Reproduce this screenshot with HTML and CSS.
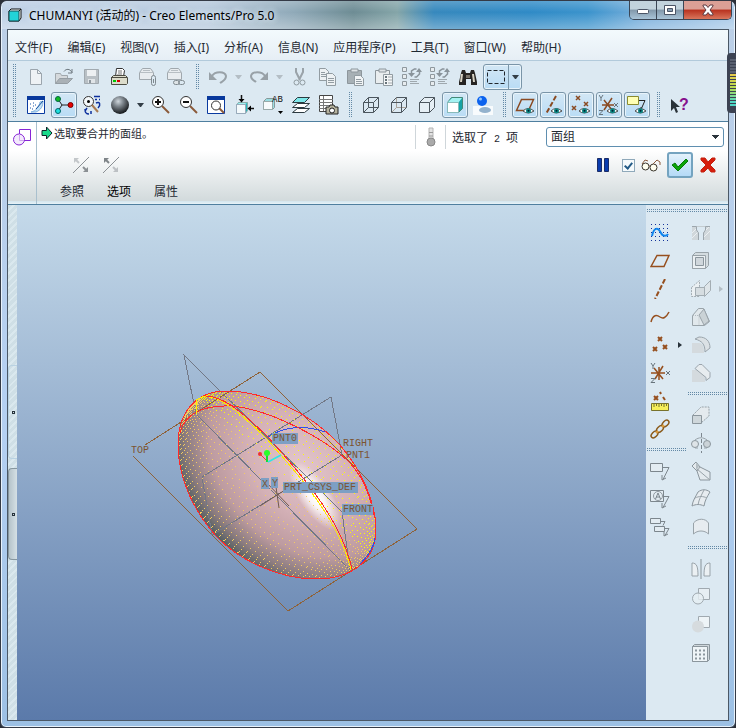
FILE: index.html
```html
<!DOCTYPE html>
<html lang="zh-CN">
<head>
    <meta charset="UTF-8">
    <meta name="viewport" content="width=device-width, initial-scale=1.0">
    <title>CHUMANYI (活动的) - Creo Elements/Pro 5.0</title>
    <link rel="stylesheet" href="styles.css">
</head>
<body>
<div class="window">
    <header class="titlebar">
        <svg class="app-icon" width="14" height="14" viewBox="0 0 14 14"><path d="M1 3l2-2h10v9l-2 3H1z" fill="#f4ffff" stroke="#111"/><path d="M1 3h10v10H1z" fill="#22d3d8" stroke="#174b50"/><path d="M11 3l2-2" stroke="#111"/></svg>
        <h1>CHUMANYI (活动的) - Creo Elements/Pro 5.0</h1>
        <div class="window-buttons">
            <button class="win-btn" aria-label="最小化"><svg width="14" height="10" viewBox="0 0 14 10"><rect x="1.5" y="4.5" width="11" height="4" rx="1" fill="#fff" stroke="#4b5566"/></svg></button>
            <button class="win-btn" aria-label="最大化"><svg width="14" height="12" viewBox="0 0 14 12"><path d="M1.5 1.5h11v9h-11z" fill="#fff" stroke="#4b5566"/><path d="M4.5 4.5h5v3h-5z" fill="#8aa0b4" stroke="#4b5566"/></svg></button>
            <button class="win-btn close" aria-label="关闭"><svg width="14" height="12" viewBox="0 0 14 12"><path d="M2 1h3l2 2.500L9 1h3v1L9 6l3 4v1H9L7 8.500 5 11H2v-1l3-4-3-4z" fill="#fff" stroke="#5d3a40"/></svg></button>
        </div>
    </header>

    <div class="client">
        <nav class="menubar">
            <button>文件(F)</button>
            <button>编辑(E)</button>
            <button>视图(V)</button>
            <button>插入(I)</button>
            <button>分析(A)</button>
            <button>信息(N)</button>
            <button>应用程序(P)</button>
            <button>工具(T)</button>
            <button>窗口(W)</button>
            <button>帮助(H)</button>
        </nav>

        <div class="toolbars">
            <span class="grip-v tall"></span>
            <div class="toolbar-rows">
                <!-- 文件 / 编辑 -->
                <div class="toolbar">
                    <button class="tool" aria-label="新建"><svg viewBox="0 0 20 20"><path d="M4.500 2.500h7l4 4v11h-11z" fill="#eef2f5" stroke="#9ba5ad"/><path d="M11.500 2.500v4h4" fill="none" stroke="#9ba5ad"/></svg></button>
                    <button class="tool" aria-label="打开"><svg viewBox="0 0 20 20"><path d="M1.500 16.500v-10h5l1 2h6v3" fill="#d5d9dc" stroke="#a1a8ad"/><path d="M1.500 16.500l4-5h13l-5 5z" fill="#aab1b6" stroke="#959da3"/><path d="M10 4.500c2-3 6-3 8 1M18 2v4h-4" fill="none" stroke="#6e7980"/></svg></button>
                    <button class="tool" aria-label="保存"><svg viewBox="0 0 20 20"><path d="M2.500 2.500h14v14h-14z" fill="#b9c0c5" stroke="#a1a9af"/><path d="M5 3h9v6H5z" fill="#edf0f2"/><path d="M6 12h7v4H6z" fill="#e1e5e8"/><path d="M7 13h2v3H7z" fill="#8f989f"/></svg></button>
                    <button class="tool" aria-label="打印"><svg viewBox="0 0 20 20"><path d="M5.500 9.500l1-8h6l2 2-1 6z" fill="#fff" stroke="#333"/><path d="M8 4h4M8 6h4M7 8h5" stroke="#777"/><path d="M1.500 10.500l2-2h12l2 2v6l-1 1h-15z" fill="#dcdccb" stroke="#4c4c42"/><path d="M1 10.500h16" stroke="#4c4c42"/><path d="M3 13h3v2H3z" fill="#00c400"/><path d="M7 13h3v2H7z" fill="#d80000"/></svg></button>
                    <button class="tool" aria-label="发送"><svg viewBox="0 0 20 20"><path d="M1.500 5.500l3-4h8l3 4v7h-14z" fill="#e8ecef" stroke="#a0a8ae"/><path d="M1.500 5.500h14M5 3.500h7" stroke="#b7bec3"/><path d="M13.500 10.500v6a2 2 0 0 0 4 0v-6a2 2 0 0 0-4 0M15.500 12v4" fill="#dce9f2" stroke="#7f898f"/></svg></button>
                    <button class="tool" aria-label="发送链接"><svg viewBox="0 0 20 20"><path d="M1.500 5.500l3-4h8l3 4v7h-14z" fill="#e8ecef" stroke="#a0a8ae"/><path d="M1.500 5.500h14M5 3.500h7" stroke="#b7bec3"/><rect x="7.500" y="13.500" width="6" height="4" rx="2" fill="#dde3e6" stroke="#7f898f"/><rect x="12.500" y="13.500" width="6" height="4" rx="2" fill="none" stroke="#7f898f"/></svg></button>
                    <span class="grip-v"></span>
                    <button class="tool" aria-label="撤消"><svg viewBox="0 0 20 20"><path d="M4 9c3-5 13-5 14 0 0 4-3 5-6 7" fill="none" stroke="#98a1a7" stroke-width="2"/><path d="M1 5v8h8z" fill="#98a1a7"/></svg></button>
                    <button class="drop pale" aria-label="撤消列表"></button>
                    <button class="tool" aria-label="重做"><svg viewBox="0 0 20 20"><path d="M16 9C13 4 3 4 2 9c0 4 3 4 5 6" fill="none" stroke="#98a1a7" stroke-width="2"/><path d="M19 5v8h-8z" fill="#98a1a7"/></svg></button>
                    <button class="drop pale" aria-label="重做列表"></button>
                    <button class="tool" aria-label="剪切"><svg viewBox="0 0 20 20"><path d="M6 1v4l4 8M13 1v4l-4 8" fill="none" stroke="#9aa3a9" stroke-width="2"/><circle cx="6.500" cy="15.500" r="2.500" fill="none" stroke="#8f999f"/><circle cx="12.500" cy="15.500" r="2.500" fill="none" stroke="#8f999f"/></svg></button>
                    <button class="tool" aria-label="复制"><svg viewBox="0 0 20 20"><g fill="#edf1f3" stroke="#929ca2"><path d="M1.500 1.500h6l3 3v9h-9z"/><path d="M8.500 6.500h6l3 3v9h-9z"/></g><path d="M3 5.500h4M3 7.500h5M3 9.500h5M10 11.500h6M10 13.500h6M10 15.500h6" stroke="#929ca2"/></svg></button>
                    <button class="tool" aria-label="粘贴"><svg viewBox="0 0 20 20"><path d="M1.500 3.500h14v13h-14z" fill="#a7b0b5" stroke="#8d969c"/><path d="M5 2h7v3H5z" fill="#dfe4e7" stroke="#8d969c"/><path d="M8.500 8.500h6l3 3v7h-9z" fill="#f1f4f6" stroke="#929ca2"/><path d="M10 12.500h5M10 14.500h6M10 16.500h6" stroke="#929ca2"/></svg></button>
                    <button class="tool" aria-label="选择性粘贴"><svg viewBox="0 0 20 20"><path d="M1.500 3.500h14v13h-14z" fill="#e9edef" stroke="#8d969c"/><path d="M5 2h7v3H5z" fill="#dfe4e7" stroke="#8d969c"/><path d="M9.500 7.500h9v11h-9z" fill="#f4f6f7" stroke="#929ca2"/><path d="M11 10h2M11 13h2M11 16h2" stroke="#68747b" stroke-width="2"/><path d="M14 10h4M14 13h4M14 16h4" stroke="#a2aaaf"/></svg></button>
                    <button class="tool" aria-label="再生"><svg viewBox="0 0 20 20"><path d="M.5.500h4v4h-4zM.5 7.500h4v4h-4zM.5 14.500h4v4h-4z" fill="#e7ecef" stroke="#8f989e"/><path d="M9.500 8V4l3-2h2M17.500 3v4l-3 3h-2" fill="none" stroke="#89939a" stroke-width="1.500"/><path d="M6 6h7l-3.500 4zM14 5h6l-3-4z" fill="#89939a"/><path d="M8 12.500h9M8 14.500h7M8 16.500h9" stroke="#9fa8ae"/></svg></button>
                    <button class="tool" aria-label="再生管理器"><svg viewBox="0 0 20 20"><path d="M.5.500h4v4h-4zM.5 7.500h4v4h-4zM.5 14.500h4v4h-4z" fill="#e7ecef" stroke="#8f989e"/><path d="M9.500 8V4l3-2h2M17.500 3v4l-3 3h-2" fill="none" stroke="#89939a" stroke-width="1.500"/><path d="M6 6h7l-3.500 4zM14 5h6l-3-4z" fill="#89939a"/><path d="M8 12.500h9M8 14.500h7M8 16.500h9" stroke="#9fa8ae"/></svg></button>
                    <button class="tool" aria-label="查找"><svg viewBox="0 0 20 20"><path d="M3 6l1-3h3l1 3h4l1-3h3l1 3 2 9v3h-6v-6H8v6H1v-3z" fill="#262422"/><path d="M4 7l-1 8M15 7l1 8" stroke="#d8d3c4" stroke-width="2"/><path d="M8 8h4v3H8z" fill="#79736a"/></svg></button>
                    <span class="split">
                        <button class="split-main" aria-label="选取框"><svg width="20" height="16" viewBox="0 0 20 16"><path d="M1.500 1.500h17v13h-17z" fill="none" stroke="#20262c" stroke-dasharray="4 2"/></svg></button>
                        <button class="drop" aria-label="选取方式"></button>
                    </span>
                </div>
                <!-- 视图 / 模型显示 / 基准显示 -->
                <div class="toolbar">
                    <button class="tool" aria-label="草绘视图"><svg viewBox="0 0 20 20"><path d="M1.500 1.500h17v17h-17z" fill="#fff" stroke="#0a3aa0"/><path d="M1 1h18v4H1z" fill="#08389c"/><path d="M5 17c5-1 8-5 9-10l3-1c0 5-2 9-7 11z" fill="#c4e2f8" stroke="#7fb0dc"/><path d="M10 14l7-8" stroke="#14509e"/><path d="M4 9h1M7 8h1M9 10h1M4 13h1M6 14h1M7 11h1" stroke="#1b56a8"/></svg></button>
                    <button class="tool on" aria-label="旋转中心"><svg viewBox="0 0 20 20"><path d="M4 4l4 6h8M8 10l-4 6" fill="none" stroke="#222"/><circle cx="4" cy="4" r="2.500" fill="#11bb22" stroke="#064"/><circle cx="4" cy="16" r="2.500" fill="#1fe0e0" stroke="#066"/><circle cx="16.500" cy="10" r="2.500" fill="#e60000" stroke="#700"/></svg></button>
                    <button class="tool" aria-label="定向模式"><svg viewBox="0 0 20 20"><circle cx="6.500" cy="6.500" r="5" fill="#f4f8fa" stroke="#333"/><circle cx="6.500" cy="6.500" r="1.500"/><path d="M10 10l6 7" stroke="#a87a52" stroke-width="2"/><path d="M12 1.500h6M13 4.500h2M17 4.500h1M14 8c4-2 5 2 2 5M3 14c0 4 1 5 4 5M5 13l-2 3M9 16v3" fill="none" stroke="#0c2f9c" stroke-width="1.500"/></svg></button>
                    <button class="tool" aria-label="外观库"><svg viewBox="0 0 20 20"><defs><radialGradient id="ball" cx=".4" cy=".3" r=".7"><stop offset="0" stop-color="#cfd6dc"/><stop offset=".4" stop-color="#7c848b"/><stop offset="1" stop-color="#15181b"/></radialGradient></defs><circle cx="10" cy="10" r="9" fill="url(#ball)"/></svg></button>
                    <button class="drop" aria-label="外观列表"></button>
                    <button class="tool" aria-label="放大"><svg viewBox="0 0 20 20"><path d="M11 11l7 7" stroke="#8b5a3a" stroke-width="2"/><circle cx="7" cy="7" r="5.500" fill="#fff" stroke="#333"/><path d="M4 7h6M7 4v6" stroke="#111" stroke-width="2"/></svg></button>
                    <button class="tool" aria-label="缩小"><svg viewBox="0 0 20 20"><path d="M11 11l7 7" stroke="#8b5a3a" stroke-width="2"/><circle cx="7" cy="7" r="5.500" fill="#fff" stroke="#333"/><path d="M4 7h6" stroke="#111" stroke-width="2"/></svg></button>
                    <button class="tool" aria-label="重新调整"><svg viewBox="0 0 20 20"><path d="M.5 1.500h17v17H.5z" fill="#fff" stroke="#0a3aa0"/><path d="M0 1h18v4H0z" fill="#08389c"/><path d="M12 13l5 5" stroke="#8b5a3a" stroke-width="2"/><circle cx="9" cy="10.500" r="4.500" fill="#fff" stroke="#333"/></svg></button>
                    <button class="tool" aria-label="重定向"><svg viewBox="0 0 20 20"><path d="M1.500 9.500l2-2h9v8l-2 3h-9z" fill="#25b8bc" stroke="#8aa"/><path d="M2 9l2-1h8l-2 1z" fill="#a3f2f2"/><path d="M1.500 9.500h9v9h-9z" fill="#f4fafc" stroke="#9ab"/><path d="M6.500 0v5M19 13.500h-4" stroke="#111" stroke-width="1.500"/><path d="M3.500 4h6l-3 3.500zM16 10.500v6l-3.500-3z"/></svg></button>
                    <button class="tool" aria-label="已命名视图"><svg viewBox="0 0 20 20"><path d="M0.500 6.500l3-3h8v9l-2 2h-9z" fill="#9bdde2" stroke="#899"/><path d="M.5 6.500h9v8h-9z" fill="#f7fbfc" stroke="#9aa"/><path d="M15 16h5l-2.500 3z"/><text x="9" y="7" class="icon-text">AB</text></svg></button>
                    <button class="tool" aria-label="层"><svg viewBox="0 0 20 20"><g stroke="#2c3a40"><path d="M1.500 17.500l5-4h12l-5 4z" fill="#fff"/><path d="M1.500 12.500l5-4h12l-5 4z" fill="#fff"/><path d="M1.500 7.500l5-5h12l-5 5z" fill="#7ee8ea"/></g></svg></button>
                    <button class="tool" aria-label="视图管理器"><svg viewBox="0 0 20 20"><path d="M.5.500h13v16H.5z" fill="#fff" stroke="#444"/><path d="M0 4.500h14M0 7.500h14M0 10.500h14M0 13.500h14M4.500 1v15" stroke="#777"/><path d="M7 12h3l1-2h4l1 2h3v7H7z" fill="#b5b29e" stroke="#222"/><circle cx="13" cy="15.500" r="2.500" fill="#fff" stroke="#222"/></svg></button>
                    <span class="grip-v"></span>
                    <button class="tool" aria-label="线框"><svg viewBox="0 0 20 20"><path d="M2.500 7.500h10v10h-10zM7.500 2.500h10v10h-10zM2.500 7.500l5-5M12.500 7.500l5-5M12.500 17.500l5-5M2.500 17.500l5-5" fill="none" stroke="#4c565e"/></svg></button>
                    <button class="tool" aria-label="隐藏线"><svg viewBox="0 0 20 20"><path d="M7.500 2.500v10h10M2.500 17.500l5-5" fill="none" stroke="#a9a39b"/><path d="M2.500 7.500h10v10h-10zM2.500 7.500l5-5h10v10l-5 5M12.500 7.500l5-5" fill="none" stroke="#4c565e"/></svg></button>
                    <button class="tool" aria-label="无隐藏线"><svg viewBox="0 0 20 20"><path d="M2.500 7.500h10v10h-10zM2.500 7.500l5-5h10v10l-5 5M12.500 7.500l5-5" fill="#e6eff5" stroke="#4c565e"/></svg></button>
                    <button class="tool on" aria-label="着色"><svg viewBox="0 0 20 20"><path d="M2.500 7.500l4-5h11v11l-4 4h-11z" fill="#14a3a6" stroke="#487"/><path d="M3 7l4-4h10l-3.500 4.500z" fill="#a3f2f2"/><path d="M2.500 7.500h11v10h-11z" fill="#fff" stroke="#8bb"/></svg></button>
                    <button class="tool" aria-label="增强的真实感"><svg viewBox="0 0 20 20"><path d="M0 11h20v9H0z" fill="#f8fbfd"/><ellipse cx="12" cy="15" rx="6" ry="3" fill="#93b2cd"/><circle cx="9" cy="6" r="5" fill="#0b62ee"/><circle cx="7.500" cy="4" r="1.500" fill="#8fc6ff"/></svg></button>
                    <span class="grip-v"></span>
                    <button class="tool on" aria-label="平面显示"><svg viewBox="0 0 20 20"><path d="M1.500 15.500l5-11h12l-5 11z" fill="none" stroke="#8a4a22" stroke-width="1.500"/><use href="#eye"/></svg></button>
                    <button class="tool on" aria-label="轴显示"><svg viewBox="0 0 20 20"><path d="M13 1L3 19" stroke="#8a4a22" stroke-width="2" stroke-dasharray="5 2"/><use href="#eye"/></svg></button>
                    <button class="tool on" aria-label="点显示"><svg viewBox="0 0 20 20"><path d="M5 1l4 4M9 1l-4 4M13 7l4 4M17 7l-4 4M1 11l4 4M5 11l-4 4" stroke="#8a4a22" stroke-width="1.500"/><use href="#eye"/></svg></button>
                    <button class="tool on" aria-label="坐标系显示"><svg viewBox="0 0 20 20"><path d="M3 10h12M5 5l8 10M13 3L5 15" stroke="#8a4a22" stroke-width="1.500"/><path d="M0 0l2 3 2-3M2 3v3M0 15.500h4l-4 4h4M15 8l4 4M19 8l-4 4" fill="none" stroke="#68747c"/><use href="#eye"/></svg></button>
                    <button class="tool on" aria-label="注释显示"><svg viewBox="0 0 20 20"><path d="M.5 1.500h11v8H.5z" fill="#ffffb4" stroke="#8a8a30"/><path d="M12 5.500h6l-4 9M14 12v3h3" fill="none" stroke="#222"/><use href="#eye"/></svg></button>
                    <span class="grip-v"></span>
                    <button class="tool" aria-label="这是什么"><svg viewBox="0 0 20 20"><path d="M2 4v12l3-3 2 5 2-1-2-5h4z" fill="#2a3238"/><text x="10" y="15" class="help-mark">?</text></svg></button>
                </div>
            </div>
        </div>

        <section class="dashboard">
            <div class="feature-icon"><svg width="20" height="20" viewBox="0 0 20 20"><path d="M7.500 1.500h11v11h-11z" fill="#fff" stroke="#8726d6"/><circle cx="7" cy="11.500" r="5.500" fill="#f3eafc" stroke="#8726d6"/><path d="M7.500 6v6.500H12" fill="none" stroke="#cda6ee"/></svg></div>
            <div class="dash-main">
                <div class="dash-row">
                    <p class="message"><svg width="12" height="14" viewBox="0 0 12 14"><path d="M1 4.500h4.500V1L11 7l-5.500 6V9.500H1z" fill="#19d98a" stroke="#10222a"/></svg>选取要合并的面组。</p>
                    <div class="status">
                        <span class="thermo"><svg width="14" height="20" viewBox="0 0 14 20"><path d="M5 1h4v11H5z" fill="#e3e3e3" stroke="#b5b5b5"/><path d="M5 5.500h4M5 9h4" stroke="#999"/><circle cx="7" cy="15" r="4" fill="#aaa" stroke="#888"/></svg></span>
                        <label for="filter">选取了<span class="count"> 2 </span>项</label>
                    </div>
                    <select id="filter"><option>面组</option></select>
                </div>
                <div class="dash-row actions">
                    <button class="flip" aria-label="改变第一面组侧"><svg width="18" height="18" viewBox="0 0 18 18"><path d="M1 17L17 1" stroke="#8b9094"/><path d="M2 2h5L2 7z" fill="#c3c7ca"/><path d="M3 3l4 4" stroke="#c3c7ca" stroke-width="2"/><path d="M16 16h-5l5-5z" fill="#8b9094"/><path d="M11 11l4 4" stroke="#8b9094" stroke-width="2"/></svg></button>
                    <button class="flip" aria-label="改变第二面组侧"><svg width="18" height="18" viewBox="0 0 18 18"><path d="M1 17L17 1" stroke="#8b9094"/><path d="M2 2h5L2 7z" fill="#7e8488"/><path d="M3 3l4 4" stroke="#7e8488" stroke-width="2"/><path d="M16 16h-5l5-5z" fill="#bdc1c4"/><path d="M11 11l4 4" stroke="#bdc1c4" stroke-width="2"/></svg></button>
                    <span class="spacer"></span>
                    <button class="plain" aria-label="暂停"><svg width="12" height="14" viewBox="0 0 12 14"><path d="M.5.5h4v13h-4zM7.500.5h4v13h-4z" fill="#0a3cae" stroke="#1a2c66"/></svg></button>
                    <input type="checkbox" id="preview" checked aria-label="预览">
                    <label for="preview" aria-label="预览"><svg width="20" height="14" viewBox="0 0 20 14"><g fill="#fffff0" stroke="#3a352c"><circle cx="4.500" cy="8.500" r="3.500"/><circle cx="12.500" cy="9.500" r="3.500"/></g><path d="M1 6l3-4 3 1M12 6l4-4 3 2v3M8 8h1" fill="none" stroke="#8a5a3c"/></svg></label>
                    <button class="accept" aria-label="确定"><svg width="18" height="16" viewBox="0 0 18 16"><path d="M1 8l3-2 3 4 8-8 2 2L7 14z" fill="#0aa50a" stroke="#067a06"/></svg></button>
                    <button class="plain cancel" aria-label="取消"><svg width="18" height="16" viewBox="0 0 18 16"><path d="M2 1h4l3 4 4-4h3v2l-5 5 5 5v2h-4l-3-4-4 4H2v-2l5-5-5-5z" fill="#d71d0c" stroke="#c3200f"/></svg></button>
                </div>
                <div class="dash-row tabs">
                    <button>参照</button>
                    <button class="ready">选项</button>
                    <button>属性</button>
                </div>
            </div>
        </section>

        <main class="workspace">
            <div class="gutter">
                <button class="sash" aria-label="导航器"></button>
                <button class="sash raised" aria-label="浏览器"></button>
            </div>

            <div class="viewport">
                <svg class="model" viewBox="17 205 629 515" preserveAspectRatio="xMinYMin meet">
                    <defs>
                        <g id="eye"><path d="M8 16q5-5 11 0-6 4-11 0z" fill="#fff" stroke="#4d4d4d"/><circle cx="13.500" cy="15.800" r="2.500" fill="#0b8a86"/><circle cx="13.500" cy="15.800" r="1" fill="#023"/></g>
                        <path id="body" d="M178 445C178 412 196 391 226 391C265 391 310 413 339 444C362 470 376 503 376 530C376 560 352 579 316 579C280 579 240 561 217 537C194 512 178 478 178 445Z"/>
                        <clipPath id="inside"><use href="#body"/></clipPath>
                        <radialGradient id="skin" gradientUnits="userSpaceOnUse" cx="0" cy="0" r="1" gradientTransform="translate(302 466) rotate(43) scale(150 110)">
                            <stop offset="0" stop-color="#e2c5cb"/>
                            <stop offset=".4" stop-color="#d4b1b7"/>
                            <stop offset=".7" stop-color="#bd9ba0"/>
                            <stop offset=".88" stop-color="#8b7c7f"/>
                            <stop offset="1" stop-color="#566062"/>
                        </radialGradient>
                        <radialGradient id="shine">
                            <stop offset="0" stop-color="#fff"/>
                            <stop offset=".4" stop-color="#fff" stop-opacity=".85"/>
                            <stop offset="1" stop-color="#fff" stop-opacity="0"/>
                        </radialGradient>
                    </defs>

                    <use href="#body" fill="url(#skin)"/>
                    <g clip-path="url(#inside)">
                        <ellipse rx="40" ry="16" fill="url(#shine)" transform="translate(315 496) rotate(56)"/>
                    </g>

                    <!-- 基准平面 -->
                    <g fill="none" shape-rendering="crispEdges">
                        <path d="M145 445L260 372L417 529L288 611L133 456" stroke="#8f6238"/>
                        <path d="M184 355L342 512L350 570L196 414Z" stroke="#727886"/>
                        <path d="M331 397L342 455L212 535L202 477Z" stroke="#727886"/>
                    </g>
                    <g clip-path="url(#inside)" shape-rendering="crispEdges">
                        <path id="dots-low" stroke="#f5cb60"/>
                        <path id="dots-high" stroke="#ffff00"/>
                    </g>

                    <g fill="none" shape-rendering="crispEdges">
                        <use href="#body" stroke="#ff2a2a"/>
                        <path d="M268 437C284 426 306 425 325 432" stroke="#2f50e8"/>
                        <path d="M375 538C374 548 368 556 360 564" stroke="#2f50e8"/>
                        <path d="M180 433C186 409 210 405 233 406C270 410 325 438 350 463C362 476 370 495 374 515" stroke="#ff2a2a"/>
                        <path d="M196 414V400L204 396" stroke="#ffee00"/>
                        <path d="M203 396C221 396 239 412 266 438C299 475 339 520 351 570" stroke="#ffe600"/>
                        <path d="M204 396C222 395 241 411 268 437C301 474 341 519 352 569" stroke="#ff2a2a"/>
                    </g>

                    <!-- 旋转中心和坐标系 -->
                    <g fill="none">
                        <path d="M260 454L268 462" stroke="#e33"/>
                        <path d="M267 454V462" stroke="#1d3" stroke-width="2"/>
                        <path d="M268 462L281 455" stroke="#2ee6e6" stroke-width="1.500"/>
                        <path d="M260 506L285 490M266 482L289 506M276 487L279 508" stroke="#6f5a50"/>
                    </g>
                    <circle cx="260" cy="454" r="2" fill="#f03030"/>
                    <circle cx="267" cy="453" r="3" fill="#28ff28"/>

                    <g fill="#7d9fc4">
                        <rect x="272" y="433" width="26" height="11"/>
                        <rect x="283" y="482" width="75" height="11"/>
                        <rect x="261" y="478" width="8" height="11"/>
                        <rect x="271" y="477" width="7" height="11"/>
                        <rect x="342" y="504" width="31" height="11"/>
                    </g>
                    <g class="datum">
                        <text x="131" y="453">TOP</text>
                        <text x="273" y="441">PNT0</text>
                        <text x="343" y="446">RIGHT</text>
                        <text x="346" y="458">PNT1</text>
                        <text x="262" y="487">X</text>
                        <text x="272" y="486">Y</text>
                        <text x="284" y="490">PRT_CSYS_DEF</text>
                        <text x="343" y="512">FRONT</text>
                    </g>
                </svg>
            </div>

            <aside class="side">
                <!-- 基准 / 注释 -->
                <div class="side-col">
                    <span class="grip-h"></span>
                    <button class="tool" aria-label="草绘"><svg viewBox="0 0 20 20"><path d="M1 1.500h18M1 5.500h18M1 9.500h18M1 13.500h18M1 17.500h18" stroke="#12319a" stroke-dasharray="1 3"/><path d="M2 13c2-9 6-9 9-3 2 4 6 3 7 1" fill="none" stroke="#0f86ee" stroke-width="2"/></svg></button>
                    <button class="tool" aria-label="平面"><svg viewBox="0 0 20 20"><path d="M1 15.500l6-11h12l-5 11z" fill="none" stroke="#964f1e" stroke-width="1.500"/></svg></button>
                    <button class="tool" aria-label="轴"><svg viewBox="0 0 20 20"><path d="M15 0L5 20" stroke="#964f1e" stroke-width="2" stroke-dasharray="5 2"/></svg></button>
                    <button class="tool" aria-label="曲线"><svg viewBox="0 0 20 20"><path d="M1 15c2-8 6-7 9-5s6 1 9-5" fill="none" stroke="#964f1e" stroke-width="1.500"/></svg></button>
                    <div class="with-flyout">
                        <button class="tool" aria-label="点"><svg viewBox="0 0 20 20"><path d="M8 2l4 4M12 2l-4 4M3 12l4 4M7 12l-4 4M13 10l4 4M17 10l-4 4" stroke="#964f1e" stroke-width="2"/></svg></button>
                        <button class="flyout" aria-label="更多点工具"></button>
                    </div>
                    <button class="tool" aria-label="坐标系"><svg viewBox="0 0 20 20"><path d="M1 10h14M4 5l9 11M13 3L5 16M9 4v13" stroke="#964f1e" stroke-width="1.500"/><path d="M1 0l2 3 2-3M3 3v3M1 15.500h4l-4 4h4M16 8l4 4M20 8l-4 4" fill="none" stroke="#68747c"/></svg></button>
                    <button class="tool" aria-label="分析"><svg viewBox="0 0 20 20"><path d="M4 5l4 4M8 5L4 9M10 1l1 2M13 6l2 3" stroke="#964f1e" stroke-width="2"/><path d="M1.500 12.500h17v7h-17z" fill="#f6ef5a" stroke="#77722c"/><path d="M4 13v3M6.500 13v2M9 13v3M11.500 13v2M14 13v3M16.500 13v2" stroke="#77722c"/></svg></button>
                    <button class="tool" aria-label="参照"><svg viewBox="0 0 20 20"><g fill="none" stroke="#8a5a1a" stroke-width="1.500"><ellipse cx="4.500" cy="15.500" rx="4" ry="2.500" transform="rotate(-45 4.500 15.500)"/><ellipse cx="10" cy="10" rx="4" ry="2.500" transform="rotate(-45 10 10)"/><ellipse cx="15.500" cy="4.500" rx="4" ry="2.500" transform="rotate(-45 15.500 4.500)"/></g><path d="M6 14l2-2M12 8l2-2" stroke="#e0a040" stroke-width="2"/></svg></button>
                    <span class="grip-h between"></span>
                    <button class="tool" aria-label="注释"><svg viewBox="0 0 20 20"><path d="M.5 2.500h12v8H.5z" fill="#e3ecf2" stroke="#7c868d"/><path d="M13 6.500h6l-6 12M12 14v5l4-2" fill="none" stroke="#7c868d"/></svg></button>
                    <button class="tool" aria-label="符号"><svg viewBox="0 0 20 20"><path d="M.5 1.500h13v11H.5z" fill="#e3ecf2" stroke="#7c868d"/><circle cx="8" cy="7" r="4.500" fill="none" stroke="#8f989f"/><path d="M5.500 10L8 4l2.500 6M6 8h4M14 7.500h5l-6 11M12 14v5l4-2" fill="none" stroke="#7c868d"/></svg></button>
                    <button class="tool" aria-label="注释传播"><svg viewBox="0 0 20 20"><path d="M.5 1.500h10v5H.5zM4.500 9.500h10v5h-10z" fill="#e3ecf2" stroke="#7c868d"/><path d="M11 4.500h4l-2 4M15 11.500h4l-4 7M14 15v4l4-2" fill="none" stroke="#7c868d"/></svg></button>
                </div>
                <!-- 工程特征 / 编辑特征 -->
                <div class="side-col dim">
                    <span class="grip-h"></span>
                    <button class="tool" aria-label="孔"><svg viewBox="0 0 20 20"><path d="M1 3h5v4l2 3v7H1zM19 3h-5v4l-2 3v7h7z" fill="#cfd4d7"/><path d="M1 10l5-5M1 15l6-6M14 8l4-4M13 14l6-6" stroke="#eef1f3"/><path d="M6 3.500h8" stroke="#c0c7cb"/><path d="M1 3.500h4.500V7l2 3v7M19 3.500h-4.500V7l-2 3v7" fill="none" stroke="#929ba1"/></svg></button>
                    <button class="tool" aria-label="壳"><svg viewBox="0 0 20 20"><path d="M1.500 4.500l3-3h13v13l-3 3h-13z" fill="#d3dade" stroke="#8e979d"/><path d="M1.500 4.500h13v13h-13z" fill="#eef2f4" stroke="#8e979d"/><path d="M4.500 6.500h8v8h-8z" fill="#ced5d9" stroke="#7e888f"/></svg></button>
                    <div class="with-flyout">
                        <button class="tool" aria-label="筋"><svg viewBox="0 0 20 20"><path d="M.5 8.500l8-7v16h-8z" fill="#eef2f4" stroke="#9aa3a9" stroke-dasharray="2 1"/><path d="M13.500 7.500l6-6v10l-6 6z" fill="#dfe5e8" stroke="#9aa3a9"/><path d="M4.500 8.500h9v8h-9z" fill="#d5dbdf" stroke="#9aa3a9"/></svg></button>
                        <button class="flyout pale" aria-label="更多筋工具"></button>
                    </div>
                    <button class="tool" aria-label="拔模"><svg viewBox="0 0 20 20"><path d="M1.500 8.500l6-7h5l6 13-5 4h-12z" fill="#e3e8eb" stroke="#8e979d"/><path d="M8 8l5-6 5 12-5 4z" fill="#c7ced2" stroke="#8e979d"/><path d="M2 8.500h6v9" fill="none" stroke="#aeb6bb" stroke-dasharray="1 1"/></svg></button>
                    <button class="tool" aria-label="倒圆角"><svg viewBox="0 0 20 20"><path d="M1 8h7c4 0 5 4 5 10H1z" fill="#d3d8db"/><path d="M4 4l4-2c7 0 11 4 11 11l-5 4c0-8-3-11-10-13z" fill="#dbe0e3" stroke="#9099a0"/></svg></button>
                    <button class="tool" aria-label="倒角"><svg viewBox="0 0 20 20"><path d="M1 7h6l7 6v6H1z" fill="#d3d8db"/><path d="M4 5.500l4-4h3l8 8v5l-4 3v-3z" fill="#e9edef" stroke="#9099a0"/></svg></button>
                    <span class="grip-h between"></span>
                    <button class="tool" aria-label="拉伸"><svg viewBox="0 0 20 20"><path d="M2 10l8-8h8v9l-8 7" fill="#e6ebee" stroke="#8e979d" stroke-dasharray="2 1"/><path d="M1.500 10.500h9v8h-9z" fill="#cdd4d8" stroke="#7e888f"/></svg></button>
                    <button class="tool" aria-label="旋转"><svg viewBox="0 0 20 20"><circle cx="4" cy="11" r="3.500" fill="#dfe4e7" stroke="#7e888f"/><circle cx="16" cy="11" r="3.500" fill="#c9d0d4" stroke="#7e888f"/><path d="M10.500 0v20" stroke="#6d777e" stroke-dasharray="4 2"/><path d="M4 7c4-3 8-3 12 0M4 15h3M13 15h3" fill="none" stroke="#8e979d"/></svg></button>
                    <button class="tool" aria-label="变截面扫描"><svg viewBox="0 0 20 20"><path d="M1 5l4-4 4 5 10 5v8H9L6 10z" fill="#e6ebee" stroke="#7e888f"/><path d="M6 8l13 11M9 6l-3 4" stroke="#8e979d"/><path d="M5 1l3 5-3 3z" fill="#aeb7bc"/></svg></button>
                    <button class="tool" aria-label="边界混合"><svg viewBox="0 0 20 20"><path d="M1 17c1-6 3-8 6-14 4-3 8-3 12 0-3 5-5 8-6 14-4-2-8-2-12 0z" fill="#e9edf0" stroke="#7e888f"/><path d="M4 9c4-2 8-2 12 0M7 16c1-6 3-9 6-15" fill="none" stroke="#8e979d"/></svg></button>
                    <button class="tool" aria-label="造型"><svg viewBox="0 0 20 20"><path d="M2.500 17V6c4-5 12-5 15 0v11c-4-4-11-4-15 0z" fill="#e9edf0" stroke="#8e979d"/></svg></button>
                    <span class="grip-h between"></span>
                    <button class="tool" aria-label="镜像"><svg viewBox="0 0 20 20"><path d="M1 4c5 0 6 4 6 13H1zM19 4c-5 0-6 4-6 13h6z" fill="#eef2f4" stroke="#8e979d"/><path d="M10 0v20" stroke="#7b858b"/></svg></button>
                    <button class="tool" aria-label="合并"><svg viewBox="0 0 20 20"><path d="M7.500 1.500h11v11h-11z" fill="#e9f0f4" stroke="#969fa5"/><circle cx="7" cy="11.500" r="5.500" fill="#e9f0f4" fill-opacity=".8" stroke="#969fa5"/></svg></button>
                    <button class="tool" aria-label="修剪"><svg viewBox="0 0 20 20"><path d="M7.500 1.500h11v11h-11z" fill="#f2f6f8" stroke="#969fa5"/><circle cx="7" cy="11.500" r="6" fill="#d5d9db"/></svg></button>
                    <button class="tool" aria-label="阵列"><svg viewBox="0 0 20 20"><path d="M1.500 3.500l2-2h15v15l-2 2h-15z" fill="#ccd3d7" stroke="#7e888f"/><path d="M1.500 3.500h15v15h-15z" fill="#f2f6f8" stroke="#7e888f"/><path d="M4 7.500h10M4 11.500h10M4 15.500h10" stroke="#7e888f" stroke-width="2" stroke-dasharray="2 2"/></svg></button>
                </div>
            </aside>
        </main>
    </div>
    <div class="meter"></div>
</div>
<script src="mesh.js"></script>
</body>
</html>
```
FILE: styles.css
```css
* {
    box-sizing: border-box;
}

body {
    margin: 0;
    font-family: "Noto Sans", "Noto Sans CJK SC", sans-serif;
    font-size: 12px;
    color: #1f2a33;
    background: #2b2f38;
}

button {
    margin: 0;
    padding: 0;
    border: none;
    background: none;
    color: inherit;
    font: inherit;
}

svg {
    display: block;
}

.window {
    position: relative;
    display: flex;
    flex-direction: column;
    min-height: 100vh;
    padding: 0 6px 6px;
    border: 1px solid #343a46;
    border-radius: 7px 7px 6px 6px;
    background: linear-gradient(#bccfe6, #b4d0f2 60%, #9cc0e4);
    box-shadow: inset 0 0 0 1px #e8f2fb;
}

/* 标题栏 */
.titlebar {
    display: flex;
    align-items: center;
    height: 28px;
    margin: 0 -5px;
    padding: 0 2px 0 6px;
    border-radius: 6px 6px 0 0;
    background: linear-gradient(rgba(255, 255, 255, 0.2), transparent 40%, rgba(255, 255, 255, 0.3)), linear-gradient(90deg, #bccfe5 0%, #b5c8dc 28%, #8fa9b8 40%, #6d8c94 48%, #84a5a8 54%, #3688bd 59%, #2f8ac6 72%, #3b93cc 80%, #7db1dc 88%, #a9c9e8 100%);
}

.titlebar h1 {
    flex: 1;
    margin: 0 0 0 7px;
    font-size: 12px;
    font-weight: normal;
    color: #000;
    text-shadow: 0 0 6px #e6f0fa, 0 0 6px #e6f0fa;
}

.window-buttons {
    display: flex;
    align-self: flex-start;
    border: 1px solid #3b4655;
    border-top: none;
    border-radius: 0 0 5px 5px;
    overflow: hidden;
}

.win-btn {
    display: flex;
    align-items: center;
    justify-content: center;
    width: 27px;
    height: 18px;
    border-right: 1px solid #3b4655;
    background: linear-gradient(#c2d3dd 45%, #8298aa 50%, #a9c4d8);
}

.win-btn.close {
    width: 47px;
    border-right: none;
    background: linear-gradient(#dba096 45%, #b8321f 50%, #d9765c);
}

.client {
    display: flex;
    flex: 1;
    flex-direction: column;
    border: 1px solid #4b5866;
    background: #dce9f2;
}

/* 菜单 */
.menubar {
    display: flex;
    flex-wrap: wrap;
    align-items: center;
    gap: 2px 15px;
    min-height: 31px;
    padding: 4px 7px 0;
    border-bottom: 1px solid #b2cadb;
    background: linear-gradient(#f3fafd, #e6eef5);
}

/* 工具栏 */
.toolbars {
    display: flex;
    gap: 7px;
    padding: 3px 4px;
    border-bottom: 1px solid #4f7f9f;
}

.toolbar-rows {
    display: flex;
    flex-direction: column;
    gap: 2px;
}

.toolbar {
    display: flex;
    align-items: center;
    gap: 2px;
}

.tool {
    display: flex;
    flex: none;
    align-items: center;
    justify-content: center;
    width: 26px;
    height: 26px;
    border-radius: 3px;
}

.tool svg {
    width: 20px;
    height: 20px;
}

.tool.on,
.split {
    border: 1px solid #7a95a8;
    border-radius: 3px;
    background: linear-gradient(#d3e7f5, #b9dcf5);
    box-shadow: inset 0 0 0 1px #e8f4fb;
}

.icon-text {
    font: 9px "Liberation Mono", monospace;
    fill: #111;
}

.help-mark {
    font: bold 16px "Liberation Sans", sans-serif;
    fill: #86108c;
}

/* 拖动条：小方点 */
.grip-v {
    width: 12px;
    height: 26px;
    padding: 0 4px;
    background: conic-gradient(#6389a6 90deg, transparent 0) content-box 0 0 / 2px 2px;
}

.grip-v.tall {
    width: 4px;
    height: auto;
    padding: 0;
}

.drop {
    width: 11px;
    height: 24px;
}

.drop::before {
    content: "";
    display: block;
    width: 1px;
    margin: 0 auto;
    border: 3px solid transparent;
    border-top: 4px solid #333e47;
    border-bottom: none;
}

.drop.pale::before {
    border-top-color: #b4bec5;
}

.split {
    display: flex;
    height: 26px;
}

.split-main {
    display: flex;
    align-items: center;
    justify-content: center;
    width: 25px;
    border-right: 1px solid #7a95a8;
}

.split .drop {
    width: 12px;
}

/* 操控板 */
.dashboard {
    display: flex;
    border-bottom: 1px solid #4f7f9f;
    background: linear-gradient(#fff 35%, #d2dadc 96%, #d6e8f0 97%, #e8f2f7);
}

.feature-icon {
    width: 29px;
    padding: 6px 4px;
    border-right: 1px solid #a9c0ce;
}

.dash-main {
    flex: 1;
    padding-bottom: 1px;
}

.dash-row {
    display: flex;
    align-items: center;
    height: 30px;
    padding: 0 4px;
}

.message {
    display: flex;
    flex: 1;
    align-items: center;
    gap: 1px;
    margin: 0 0 8px;
    font-size: 11px;
}

.status {
    display: flex;
    align-items: center;
    width: 131px;
}

.count {
    font: 10px "Liberation Mono", monospace;
}

.thermo {
    display: flex;
    align-items: center;
    justify-content: center;
    width: 31px;
    height: 24px;
    margin-right: 6px;
    border: solid #cfd6da;
    border-width: 0 1px;
}

#filter {
    width: 178px;
    height: 20px;
    padding: 0 4px;
    border: 1px solid #5f8fb0;
    border-radius: 3px;
    appearance: none;
    background: conic-gradient(from -45deg at 50% 100%, #2b343c 90deg, transparent 0) right 4px center / 7px 4px no-repeat #fff;
    color: #1f2a33;
    font: inherit;
    line-height: 18px;
}

.actions {
    gap: 2px;
    height: 26px;
    padding-right: 7px;
}

.flip {
    display: flex;
    justify-content: center;
    width: 28px;
}

.flip:first-child {
    margin-left: 26px;
}

.spacer {
    flex: 1;
}

.plain {
    display: flex;
    align-items: center;
    justify-content: center;
    width: 26px;
    height: 26px;
}

#preview {
    width: 13px;
    height: 13px;
    margin: 0 4px;
    border: 1px solid #8fa9ba;
    appearance: none;
    background: #f5fafc;
}

#preview:checked::before {
    content: "";
    display: block;
    width: 3px;
    height: 6px;
    margin: 1px auto;
    border: solid #235a86;
    border-width: 0 2px 2px 0;
    transform: rotate(40deg);
}

.accept {
    display: flex;
    align-items: center;
    justify-content: center;
    width: 26px;
    height: 26px;
    margin-left: 4px;
    border: 2px solid #74a3bf;
    border-radius: 3px;
    background: linear-gradient(#e3f1fb, #b4daf7);
}

.tabs {
    gap: 23px;
    height: 25px;
    padding-left: 23px;
}

.tabs .ready {
    color: #000;
}

/* 工作区 */
.workspace {
    display: flex;
    flex: 1;
}

.gutter {
    display: flex;
    flex-direction: column;
    justify-content: center;
    gap: 9px;
    width: 9px;
    background: repeating-linear-gradient(135deg, #cfdfe6 0 3px, #dae8ee 3px 5px);
}

.sash {
    display: flex;
    align-items: center;
    justify-content: center;
    height: 94px;
    border: 1px solid #b9d2e2;
    border-right: none;
    border-radius: 4px 0 0 4px;
}

.sash::before {
    content: "";
    width: 1px;
    height: 1px;
    border: 1px solid #26323a;
}

.sash.raised {
    height: 92px;
    border-color: #87979f;
    background: linear-gradient(90deg, #b5c3ca, #d5e0e5);
}

.viewport {
    flex: 1;
    min-width: 0;
    background: linear-gradient(#c5daea, #5b7aaa);
}

.model {
    width: 100%;
}

.datum {
    font: 10px "Liberation Mono", monospace;
    fill: #7c5430;
}

/* 特征工具栏 */
.side {
    display: flex;
    gap: 1px;
    padding-right: 1px;
}

.side-col {
    width: 40px;
}

.side-col .tool {
    width: 28px;
    height: 28px;
}

.dim .tool {
    opacity: 0.85;
}

.grip-h {
    display: block;
    height: 14px;
    padding: 4px 0 6px;
    background: conic-gradient(#6389a6 90deg, transparent 0) content-box 0 0 / 2px 2px;
}

.grip-h.between {
    padding: 5px 0;
}

.with-flyout {
    display: flex;
    align-items: center;
}

.flyout {
    margin-left: 4px;
    border: 3px solid transparent;
    border-left: 4px solid #28323a;
    border-right: none;
}

.flyout.pale {
    border-left-color: #b4bec5;
}

/* 屏幕边上的音量条 */
.meter {
    position: absolute;
    top: 52px;
    right: -1px;
    width: 9px;
    height: 60px;
    padding: 6px 0 6px 3px;
    border-radius: 4px 0 0 4px;
    background: repeating-linear-gradient(transparent 0 2px, #3c4252 2px 3px) content-box, linear-gradient(#596070 30%, #e8c94a 31%, #b6dd52 60%, #4fd6c6 90%) content-box, #3c4252;
}
```
FILE: mesh.js
```js
// 曲面网格点：沿长轴按经纬度排布
var cx = 277, cy = 485, a = 117, b = 77, angle = 42.6 * Math.PI / 180;
var low = '', high = '';
var seed = 7;

function rnd() {
    seed = (seed * 16807) % 2147483647;
    return seed / 2147483647;
}

for (var lat = -88; lat <= 88; lat += 3) {
    for (var lon = -88; lon <= 88; lon += 6) {
        var p = lat * Math.PI / 180;
        var q = (lon + rnd() * 4) * Math.PI / 180;
        var u = a * Math.sin(p);
        var v = b * Math.cos(p) * Math.sin(q);
        var x = Math.round(cx + u * Math.cos(angle) - v * Math.sin(angle));
        var y = Math.round(cy + u * Math.sin(angle) + v * Math.cos(angle));
        var dot = 'M' + x + ' ' + (y + 0.5) + 'h1';
        if (v < -12) {
            high += dot;
        } else {
            low += dot;
        }
    }
}

document.getElementById('dots-low').setAttribute('d', low);
document.getElementById('dots-high').setAttribute('d', high);
```
